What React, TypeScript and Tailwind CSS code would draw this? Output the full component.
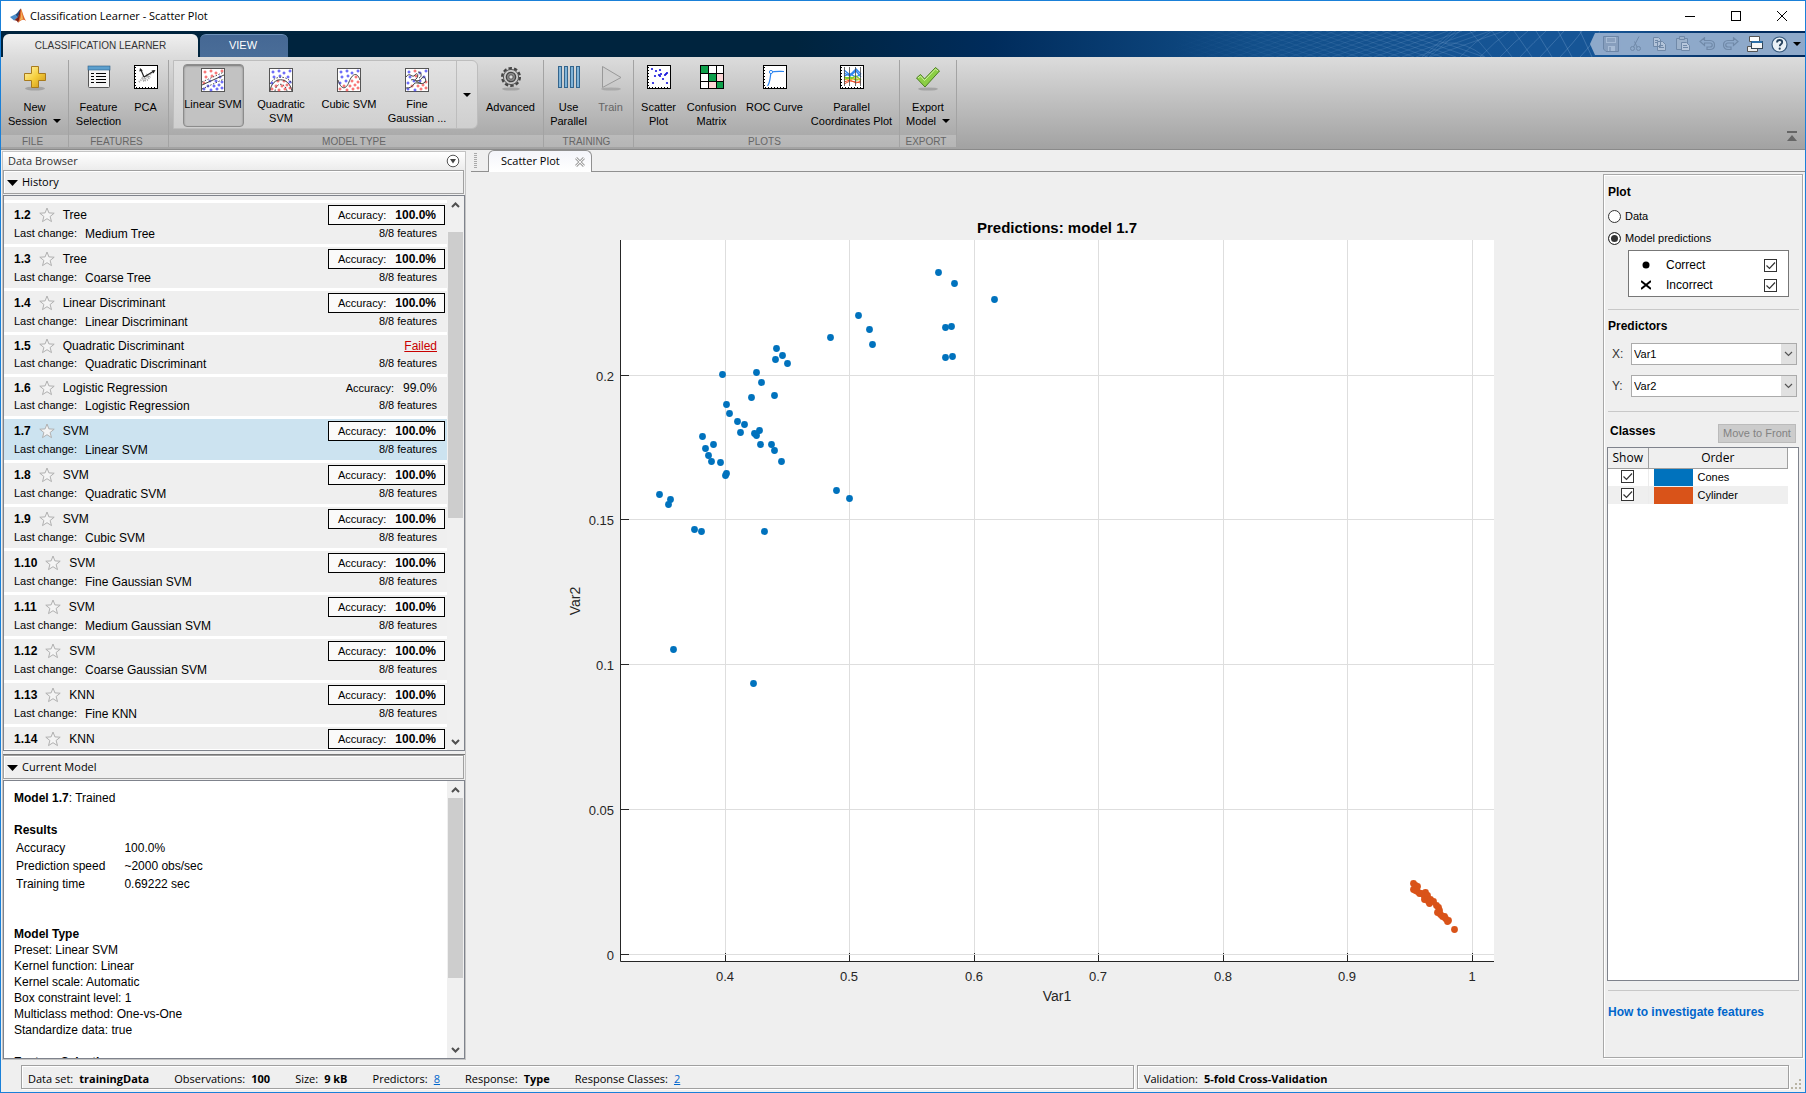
import { useState } from "react";
import type { ReactNode } from "react";
import clsx from "clsx";

const segoe = "font-['Open_Sans','Noto_Sans',sans-serif]";

type Model = { id: string; type: string; change?: string; result?: "best" | "plain" | "failed" };

const models: Model[] = [
  { id: "1.2", type: "Tree", change: "Medium Tree" },
  { id: "1.3", type: "Tree", change: "Coarse Tree" },
  { id: "1.4", type: "Linear Discriminant", change: "Linear Discriminant" },
  { id: "1.5", type: "Quadratic Discriminant", change: "Quadratic Discriminant", result: "failed" },
  { id: "1.6", type: "Logistic Regression", change: "Logistic Regression", result: "plain" },
  { id: "1.7", type: "SVM", change: "Linear SVM" },
  { id: "1.8", type: "SVM", change: "Quadratic SVM" },
  { id: "1.9", type: "SVM", change: "Cubic SVM" },
  { id: "1.10", type: "SVM", change: "Fine Gaussian SVM" },
  { id: "1.11", type: "SVM", change: "Medium Gaussian SVM" },
  { id: "1.12", type: "SVM", change: "Coarse Gaussian SVM" },
  { id: "1.13", type: "KNN", change: "Fine KNN" },
  { id: "1.14", type: "KNN" },
];

// positions inside the axes, measured from the top left corner
const cones = [
  [318, 32], [334, 43], [374, 59], [238, 75], [249, 89], [252, 104], [210, 97], [325, 87], [331, 86], [325, 117],
  [332, 116], [156, 108], [162, 115], [155, 119], [167, 123], [102, 134], [136, 132], [141, 142], [154, 155], [131, 157],
  [106, 164], [109, 173], [117, 181], [124, 184], [120, 192], [139, 190], [134, 193], [136, 195], [140, 204], [151, 204],
  [154, 210], [161, 221], [82, 196], [93, 204], [85, 208], [88, 215], [91, 221], [100, 222], [106, 233], [105, 235],
  [39, 254], [50, 259], [48, 264], [216, 250], [229, 258], [74, 289], [81, 291], [144, 291], [53, 409], [133, 443],
];

const cylinders = [
  [793, 643], [795, 645], [797, 646], [793, 649], [795, 650], [797, 651], [799, 653], [801, 653], [805, 652], [804, 656],
  [807, 655], [804, 659], [807, 659], [808, 661], [809, 663], [810, 659], [813, 661], [816, 665], [818, 667], [819, 670],
  [817, 672], [820, 674], [822, 676], [824, 676], [825, 678], [828, 680], [827, 681], [834, 689],
];

const xTicks = [
  [105, "0.4"], [229, "0.5"], [354, "0.6"], [478, "0.7"], [603, "0.8"], [727, "0.9"], [852, "1"],
] as const;

const yTicks = [
  [135, "0.2"], [279, "0.15"], [424, "0.1"], [569, "0.05"], [714, "0"],
] as const;

/* ---------- icons ---------- */

function Logo() {
  return (
    <svg width="18" height="18" viewBox="0 0 18 18">
      <path d="M1 10 L6 7.5 L9 10.5 L5 13.5 Z" fill="#4a8cc9" />
      <path d="M6 7.5 C8.5 7 9.5 3 12 1.5 L9 10.5 Z" fill="#1f4f86" />
      <path d="M5 13.5 L9 10 C10 6 10.5 3 12 1.5 L11.5 12 L9 15.5 C8 14 6.5 13 5 13.5 Z" fill="#7c1f16" />
      <path d="M12 1.5 C13.5 5 15 11 17 14 C14.5 12 12.5 12.5 9 16 C11 11 11 5 12 1.5 Z" fill="#e0672a" />
      <path d="M12 1.5 C12.6 5 12.5 9 10.5 14 C11.8 12.8 13 12.5 14 12.5 C13.5 9 12.8 4 12 1.5 Z" fill="#f3b65a" />
    </svg>
  );
}

function PlusIcon() {
  return (
    <svg width="24" height="26" viewBox="0 0 24 26">
      <defs>
        <linearGradient id="gold" x1="0" y1="0" x2="1" y2="1">
          <stop offset="0" stopColor="#fff6b8" />
          <stop offset=".5" stopColor="#f6cf3d" />
          <stop offset="1" stopColor="#c98f12" />
        </linearGradient>
      </defs>
      <ellipse cx="12" cy="23.5" rx="10" ry="2" fill="#000" opacity=".18" />
      <path d="M8.5 1.5h7v7h7v7h-7v7h-7v-7h-7v-7h7z" fill="url(#gold)" stroke="#a87a1c" />
    </svg>
  );
}

function FeatureIcon() {
  return (
    <svg width="24" height="24" viewBox="0 0 24 24">
      <rect x="1.5" y="1.5" width="21" height="21" rx="1" fill="#f4f4f4" stroke="#555" />
      <rect x="1" y="1" width="22" height="4" fill="#5c9fcd" stroke="#2c5f86" strokeWidth=".6" />
      <path d="M4 8.500h3M4 11.500h3M4 14.500h3M4 17.500h3" stroke="#000" />
      <path d="M9 8.500h10M9 11.500h10M9 14.500h10M9 17.500h10" stroke="#000" />
    </svg>
  );
}

function PlotFrame({ children }: { children: ReactNode }) {
  return (
    <svg width="24" height="24" viewBox="0 0 24 24">
      <rect x=".5" y=".5" width="23" height="23" fill="#fff" stroke="#000" />
      <path d="M1.500 2V22" stroke="#000" strokeDasharray="1 2" />
      <path d="M2 22.500H22" stroke="#000" strokeDasharray="1 2" />
      {children}
    </svg>
  );
}

function PcaIcon() {
  return (
    <PlotFrame>
      <path d="M5 17l3-3 2 1 3-4 2 1 3-5M8 12l3 2 2-4 3 3M9 16l4-1 3-3" stroke="#aaa" strokeWidth="2" strokeDasharray="1 1" fill="none" />
      <path d="M10 12L20 6M10 12L7 5" stroke="#222" strokeWidth="1.200" />
      <path d="M21.500 5l-4 .6 2 3zM6 3l-.6 3.500 3.400-1z" fill="#222" />
    </PlotFrame>
  );
}

const dotSpots = [
  [4, 4], [10, 3], [15, 5], [21, 3], [5, 9], [11, 8], [19, 9], [3, 15], [9, 13], [15, 13], [21, 14],
  [7, 18], [13, 18], [18, 17], [3, 21], [10, 22], [16, 21], [21, 20],
];

function SvmIcon({ isBlue, lines, dashes }: { isBlue: (x: number, y: number) => boolean; lines: string; dashes?: string }) {
  return (
    <svg width="24" height="24" viewBox="0 0 24 24">
      <rect x=".5" y=".5" width="23" height="23" fill="#fff" stroke="#555" />
      {dotSpots.map(([x, y]) => (
        <circle key={`${x}-${y}`} cx={x} cy={y} r="1" fill="#fff" stroke={isBlue(x, y) ? "#3030f4" : "#f43c3c"} strokeWidth=".9" />
      ))}
      <path d={lines} fill="none" stroke="#444" />
      {dashes && <path d={dashes} fill="none" stroke="#222" strokeWidth=".8" strokeDasharray="1.500 1.500" />}
    </svg>
  );
}

function GearIcon() {
  return (
    <svg width="24" height="26" viewBox="0 0 24 26">
      <ellipse cx="12" cy="24" rx="9" ry="1.600" fill="#000" opacity=".18" />
      <circle cx="12" cy="12" r="8.800" fill="none" stroke="#444" strokeWidth="2.400" strokeDasharray="3.400 2.130" />
      <circle cx="12" cy="12" r="7.600" fill="#c9c9c9" stroke="#555" />
      <circle cx="12" cy="12" r="4.600" fill="#8d8d8d" stroke="#444" strokeWidth="1.400" />
      <circle cx="12" cy="12" r="2.200" fill="#ddd" stroke="#555" />
    </svg>
  );
}

function ParallelIcon() {
  return (
    <svg width="24" height="24" viewBox="0 0 24 24">
      {[1.5, 7.5, 13.5, 19.5].map((x) => (
        <rect key={x} x={x} y="1.500" width="3" height="21" fill="#7fb3d8" stroke="#34658c" />
      ))}
    </svg>
  );
}

function TrainIcon() {
  return (
    <svg width="24" height="26" viewBox="0 0 24 26">
      <ellipse cx="12" cy="24" rx="10" ry="1.600" fill="#000" opacity=".15" />
      <path d="M3.500 1.500L22 12.500 3.500 22.500z" fill="#cfcfcf" stroke="#999" />
    </svg>
  );
}

function ScatterIcon() {
  return (
    <PlotFrame>
      {[[5, 4], [9, 6], [13, 5], [8, 11], [13, 11], [14, 9], [19, 9], [20, 8], [12, 10], [16, 14], [6, 18], [20, 18], [18, 10]].map(([x, y], i) => (
        <circle key={i} cx={x} cy={y} r="1.100" fill="#1414dc" />
      ))}
    </PlotFrame>
  );
}

function ConfusionIcon() {
  const cells = ["#0ea04b", "#fff", "#fff", "#fff", "#0ea04b", "#fcd6d6", "#fff", "#fcd6d6", "#0ea04b"];
  return (
    <svg width="24" height="24" viewBox="0 0 24 24">
      <rect width="24" height="24" />
      {cells.map((fill, i) => (
        <rect key={i} x={(i % 3) * 8 + 1} y={Math.floor(i / 3) * 8 + 1} width={i % 3 === 2 ? 6 : 7} height={i > 5 ? 6 : 7} fill={fill} />
      ))}
    </svg>
  );
}

function RocIcon() {
  return (
    <PlotFrame>
      <path d="M4.500 21C7.500 17 7 12 8 7.500c3-1.500 8-1 13-1" fill="none" stroke="#2f86f0" strokeWidth="1.200" />
      <circle cx="8" cy="7" r="1.600" fill="#fff" stroke="#2f86f0" />
    </PlotFrame>
  );
}

function CoordsIcon() {
  return (
    <PlotFrame>
      <path d="M4 5l6 5 6-6 5 5M4 8l6 3 6-5 5 6M4 11l6-2 6 3 5-3" fill="none" stroke="#2f86f0" strokeWidth="1.300" />
      <path d="M4 12l6 2 6-3 5 4M4 15l6-3 6 3 5-1" fill="none" stroke="#7fd02a" strokeWidth="1.400" />
      <path d="M4 14l6 1 6-2 5 3" fill="none" stroke="#f5b82e" />
      <path d="M4 17l6-2 6 3 5-2M4 19l6-3 6 1 5 1" fill="none" stroke="#f0502a" />
      <path d="M4.500 2v19M9.500 2v19M15.500 2v19M20.500 2v19" stroke="#444" strokeWidth=".8" />
    </PlotFrame>
  );
}

function ExportIcon() {
  return (
    <svg width="26" height="26" viewBox="0 0 26 26">
      <ellipse cx="13" cy="24" rx="10" ry="1.600" fill="#000" opacity=".18" />
      <path d="M1.500 13l4-3.500 4 4.500L20.500 2.500l4 3.500L10 22z" fill="#8ccf45" stroke="#4b7f1f" />
      <path d="M3 13l2.500-2 4 4.500L20.500 4l2.500 2" fill="none" stroke="#d3f0a5" />
    </svg>
  );
}

function Star() {
  return (
    <svg width="16" height="16" viewBox="0 0 16 16" className="shrink-0">
      <path d="M8 1l1.900 4.900 5.300.3-4.100 3.300 1.400 5.100L8 11.700l-4.500 2.900 1.400-5.100L.8 6.200l5.300-.3z" fill="#f4f4f4" stroke="#b0b0b0" />
    </svg>
  );
}

function Caret() {
  return (
    <svg width="8" height="4" viewBox="0 0 8 4">
      <path d="M0 0h8L4 4z" fill="#000" />
    </svg>
  );
}

/* ---------- small controls ---------- */

function Check({ label }: { label: string }) {
  return (
    <span className="relative inline-flex size-[13px]">
      <input type="checkbox" defaultChecked aria-label={label} className="peer size-[13px] appearance-none border border-[#333] bg-white" />
      <svg width="13" height="13" viewBox="0 0 13 13" className="pointer-events-none absolute inset-0 hidden peer-checked:block">
        <path d="M2.500 6.500l3 3 5.500-6" fill="none" stroke="#333" strokeWidth="1.200" />
      </svg>
    </span>
  );
}

function ScrollBar({ children }: { children: ReactNode }) {
  return (
    <div className="flex w-[17px] shrink-0 flex-col bg-[#f0f0f0] px-px">
      <button type="button" aria-label="Scroll up" className="flex h-[17px] items-center justify-center">
        <svg width="9" height="6" viewBox="0 0 9 6"><path d="M1 5l3.500-3.500L8 5" fill="none" stroke="#505050" strokeWidth="2" /></svg>
      </button>
      <div className="flex flex-1 flex-col">{children}</div>
      <button type="button" aria-label="Scroll down" className="flex h-[17px] items-center justify-center">
        <svg width="9" height="6" viewBox="0 0 9 6"><path d="M1 1l3.500 3.500L8 1" fill="none" stroke="#505050" strokeWidth="2" /></svg>
      </button>
    </div>
  );
}

function Tool({ icon, lines, width, menu, disabled }: { icon: ReactNode; lines: string[]; width: string; menu?: boolean; disabled?: boolean }) {
  return (
    <button type="button" disabled={disabled} className={clsx("flex shrink-0 flex-col items-center pt-2 text-[11px] leading-[14px]", width, disabled ? "text-[#666]" : "text-black")}>
      <span className="flex h-6 items-start justify-center">{icon}</span>
      <span className="mt-[11px] flex flex-col items-center whitespace-nowrap">
        {lines.map((line, i) => (
          <span key={line} className="flex items-center gap-1.5">
            {line}
            {menu && i === lines.length - 1 && <Caret />}
          </span>
        ))}
      </span>
    </button>
  );
}

function GalleryItem({ icon, lines, active, onClick }: { icon: ReactNode; lines: string[]; active: boolean; onClick: () => void }) {
  return (
    <div className="flex w-[68px] shrink-0 justify-center pt-[3px] pb-px">
      <button
        type="button"
        onClick={onClick}
        className={clsx(
          "flex w-[61px] flex-col items-center rounded border pt-[3px] text-[11px] leading-[14px] whitespace-nowrap",
          active ? "border-[#8c8c8c] bg-[#c2c2c2] shadow-[inset_0_1px_2px_#777]" : "border-transparent"
        )}
      >
        {icon}
        <span className="mt-[5px] flex flex-col items-center">
          {lines.map((line) => <span key={line}>{line}</span>)}
        </span>
      </button>
    </div>
  );
}

function Section({ title, children, className }: { title: string; children: ReactNode; className?: string }) {
  return (
    <section className={clsx("mt-[3px] mb-[2px] flex shrink-0 flex-col border-r border-[#a3a3a3]", className)}>
      <div className="-mt-[3px] flex flex-1 justify-center">{children}</div>
      <h2 className="h-3 bg-white/20 pr-1 text-center text-[10px] leading-[13px] text-[#666]">{title}</h2>
    </section>
  );
}

/* ---------- window parts ---------- */

function TitleBar() {
  return (
    <header className={clsx("flex h-[30px] shrink-0 items-center bg-white pl-2 text-[11px]", segoe)}>
      <Logo />
      <h1 className="ml-[3px] flex-1">Classification Learner - Scatter Plot</h1>
      <button type="button" aria-label="Minimize" className="flex h-full w-[46px] items-center justify-center">
        <svg width="10" height="10" viewBox="0 0 10 10"><path d="M0 5.500h10" stroke="#000" /></svg>
      </button>
      <button type="button" aria-label="Maximize" className="flex h-full w-[46px] items-center justify-center">
        <svg width="10" height="10" viewBox="0 0 10 10"><rect x=".5" y=".5" width="9" height="9" fill="none" stroke="#000" /></svg>
      </button>
      <button type="button" aria-label="Close" className="flex h-full w-[46px] items-center justify-center">
        <svg width="10" height="10" viewBox="0 0 10 10"><path d="M0 0l10 10M10 0L0 10" stroke="#000" /></svg>
      </button>
    </header>
  );
}

function MeshPattern() {
  const steps = Array.from({ length: 21 }, (_, i) => i);
  return (
    <svg width="430" height="26" viewBox="0 0 430 26" className="absolute inset-y-0 right-[205px]">
      <defs>
        <linearGradient id="meshFade" x1="0" x2="430" y1="0" y2="0" gradientUnits="userSpaceOnUse">
          <stop offset="0" stopColor="#8fb4dc" stopOpacity="0" />
          <stop offset="1" stopColor="#8fb4dc" stopOpacity=".45" />
        </linearGradient>
      </defs>
      <g fill="none" stroke="url(#meshFade)" strokeWidth=".7">
        {steps.map((i) => <path key={`a${i}`} d={`M${i * 14 - 20} 26L${i * 14 + 54} 0`} />)}
        {steps.map((i) => <path key={`b${i}`} d={`M${i * 14 - 40} 0L${i * 14 + 34} 26`} />)}
        {[0, 1, 2, 3, 4, 5, 6].map((i) => <path key={`c${i}`} d={`M${290 + i * 20} 26Q${305 + i * 20} 10 ${322 + i * 18} 0M${300 + i * 22} 0L${322 + i * 20} 26`} />)}
        <path d="M252 26L282 0M255 26L286 0M259 26L290 0M275 12q20-2 40 14" />
      </g>
    </svg>
  );
}

function QuickAccess() {
  return (
    <div className="absolute inset-y-[2px] right-0 flex items-center bg-[#8ea9ca] pr-[2px] pl-[9px] [clip-path:polygon(0_50%,5px_0,100%_0,100%_100%,5px_100%)]">
      <button type="button" aria-label="Save" disabled className="flex w-6 justify-center">
        <svg width="16" height="16" viewBox="0 0 16 16" opacity=".6"><path d="M.5.5h15v15H3L.5 13z" fill="#8298b5" stroke="#56708f" /><path d="M3 1h10v6H3zM5 10h7v5H5z" fill="#b8c8dc" /><path d="M4 3h8M4 5h8M7 11v4" stroke="#56708f" /></svg>
      </button>
      <button type="button" aria-label="Cut" disabled className="flex w-6 justify-center">
        <svg width="16" height="16" viewBox="0 0 16 16" fill="none" stroke="#7089a8"><path d="M12 .5L6.500 11M7.500 5.500L10 11" /><circle cx="5.500" cy="12.500" r="2" /><circle cx="11.500" cy="12.500" r="2" /></svg>
      </button>
      <button type="button" aria-label="Copy" disabled className="flex w-6 justify-center">
        <svg width="16" height="16" viewBox="0 0 16 16" fill="#b2c3d9" stroke="#7089a8"><path d="M2.500 1.500h5l2 2v7h-7zM6.500 5.500h5l3 3v6h-8z" /><path d="M4 4.500h3M4 6.500h2M8 9.500h4M8 11.500h5" /></svg>
      </button>
      <button type="button" aria-label="Paste" disabled className="flex w-6 justify-center">
        <svg width="16" height="16" viewBox="0 0 16 16" fill="#9db2cb" stroke="#7089a8"><path d="M1.500 2.500h11v11h-11z" /><path d="M4.500.5h5v3h-5z" /><path d="M6.500 6.500h5l3 3v5h-8z" fill="#b7c7dc" /><path d="M8 9.500h4M8 11.500h5" /></svg>
      </button>
      <button type="button" aria-label="Undo" disabled className="flex w-6 justify-center">
        <svg width="16" height="14" viewBox="0 0 16 14" fill="none" stroke="#7089a8" strokeWidth="1.200"><path d="M5.500.8L1 4.500l4.500 4V6H11c3 0 3 4 0 4H8v2.500h3c6 0 6-9 0-9H5.500z" /></svg>
      </button>
      <button type="button" aria-label="Redo" disabled className="flex w-6 justify-center">
        <svg width="16" height="14" viewBox="0 0 16 14" fill="none" stroke="#7089a8" strokeWidth="1.200"><path d="M10.500.8L15 4.500l-4.500 4V6H5c-3 0-3 4 0 4h3v2.500H5c-6 0-6-9 0-9h5.500z" /></svg>
      </button>
      <button type="button" aria-label="Switch windows" className="flex w-6 justify-center">
        <svg width="16" height="17" viewBox="0 0 16 17"><path d="M2.500.5h10v5h-10z" fill="#fff" stroke="#555" /><path d="M.5 10.500h10v5H.5z" fill="#eee" stroke="#555" /><rect x="4.500" y="5.500" width="11" height="7" fill="#f6f6f6" stroke="#345" /><path d="M4.500 6h11" stroke="#2d6fa8" strokeWidth="2" /></svg>
      </button>
      <button type="button" aria-label="Help" className="flex w-6 justify-center">
        <svg width="17" height="17" viewBox="0 0 17 17"><circle cx="8.500" cy="8.500" r="7.500" fill="#e9f0f6" stroke="#37597c" strokeWidth="1.200" /><path d="M6 6.500c0-3.400 5.200-3.200 5.200-.2 0 2-2.500 2-2.500 4" fill="none" stroke="#26425e" strokeWidth="1.800" /><circle cx="8.700" cy="12.700" r="1.100" fill="#26425e" /></svg>
      </button>
      <button type="button" aria-label="More" className="flex w-3 justify-center"><Caret /></button>
    </div>
  );
}

function TabBar() {
  return (
    <nav className="relative flex h-[26px] shrink-0 items-end gap-[2px] bg-[linear-gradient(to_right,#00243e_0%,#00243e_44%,#002c5c_55%,#124f8a_70%,#165596_85%,#165596_89%,#00295c_97%)] pl-[2px]">
      <button type="button" className="h-[23px] w-[195px] rounded-t-md bg-gradient-to-b from-[#f0f0f0] to-[#dcdcdc] pb-px text-[10px] text-[#333]">CLASSIFICATION LEARNER</button>
      <button type="button" className="h-[23px] w-[88px] rounded-t-md border-t border-[#6f93ba] bg-gradient-to-b from-[#456894] to-[#4a6d98] pr-[2px] pb-[2px] text-[11px] text-white">VIEW</button>
      <MeshPattern />
      <QuickAccess />
    </nav>
  );
}

const svmKinds = [
  { lines: ["Linear SVM"], icon: <SvmIcon isBlue={(x, y) => y > 17 - x / 2} lines="M1 17L23 7" dashes="M1 14L23 4M1 21L23 11" /> },
  { lines: ["Quadratic", "SVM"], icon: <SvmIcon isBlue={(x, y) => (x - 12) ** 2 + (y - 22) ** 2 > 110} lines="M1 23C3 8 20 8 23 23" dashes="M1 16C5 7 19 7 23 16M6 23c1-9 10-9 12 0" /> },
  { lines: ["Cubic SVM"], icon: <SvmIcon isBlue={(x, y) => (x < 12 ? y < 18 : y < 7)} lines="M1 12C4 22 9 22 12 14S20 3 23 12" /> },
  { lines: ["Fine", "Gaussian ..."], icon: <SvmIcon isBlue={(x, y) => (x * 3 + y) % 2 === 0} lines="M1 9c4-6 6 2 9-2s4 2 1 4 4 3 6-1 6 3 2 5-8-2-10 1-4 4-8 4M6 12c3-2 6 3 10 3M13 4c4 0 4 5 1 6" /> },
];

function Ribbon() {
  const [kind, setKind] = useState(0);
  return (
    <div className="flex h-[93px] shrink-0 border-b border-[#8a8a8a] bg-gradient-to-b from-[#dcdcdc] to-[#a2a2a2]">
      <Section title="FILE" className="w-[68px]">
        <Tool icon={<PlusIcon />} lines={["New", "Session"]} width="w-[66px]" menu />
      </Section>
      <Section title="FEATURES" className="w-[100px]">
        <Tool icon={<FeatureIcon />} lines={["Feature", "Selection"]} width="w-[54px]" />
        <Tool icon={<PcaIcon />} lines={["PCA"]} width="w-[40px]" />
      </Section>
      <Section title="MODEL TYPE" className="w-[375px]">
        <div className="mt-[3px] mb-[6px] ml-1 flex w-[305px] rounded-r-md border border-[#bdbdbd] bg-gradient-to-b from-[#e2e2e2] to-[#cfcfcf]">
          <div className="flex flex-1 pl-[5px]">
            {svmKinds.map((item, i) => (
              <GalleryItem key={i} icon={item.icon} lines={item.lines} active={kind === i} onClick={() => setKind(i)} />
            ))}
          </div>
          <button type="button" aria-label="More models" className="flex w-[21px] items-center justify-center border-l border-[#bdbdbd]"><Caret /></button>
        </div>
        <Tool icon={<GearIcon />} lines={["Advanced"]} width="w-[65px]" />
      </Section>
      <Section title="TRAINING" className="w-[90px]">
        <Tool icon={<ParallelIcon />} lines={["Use", "Parallel"]} width="w-[44px]" />
        <Tool icon={<TrainIcon />} lines={["Train"]} width="w-[40px]" disabled />
      </Section>
      <Section title="PLOTS" className="w-[266px]">
        <Tool icon={<ScatterIcon />} lines={["Scatter", "Plot"]} width="w-[44px]" />
        <Tool icon={<ConfusionIcon />} lines={["Confusion", "Matrix"]} width="w-[62px]" />
        <Tool icon={<RocIcon />} lines={["ROC Curve"]} width="w-[64px]" />
        <Tool icon={<CoordsIcon />} lines={["Parallel", "Coordinates Plot"]} width="w-[90px]" />
      </Section>
      <Section title="EXPORT" className="w-[57px]">
        <Tool icon={<ExportIcon />} lines={["Export", "Model"]} width="w-[54px]" menu />
      </Section>
      <button type="button" aria-label="Collapse toolstrip" className="mr-2 mb-2 ml-auto self-end">
        <svg width="10" height="10" viewBox="0 0 10 10"><path d="M0 0h10v2H0zM5 4l5 6H0z" fill="#666" /></svg>
      </button>
    </div>
  );
}

function PanelHeader({ title }: { title: string }) {
  return (
    <button type="button" className={clsx("mr-px flex h-6 shrink-0 items-center gap-1 border border-[#a0a0a0] pt-px pl-[3px] text-left text-[11px] shadow-[inset_1px_1px_0_#fff]", segoe)}>
      <svg width="11" height="6" viewBox="0 0 11 6"><path d="M0 0h11L5.500 6z" fill="#000" /></svg>
      {title}
    </button>
  );
}

function ModelRow({ model, selected, onSelect }: { model: Model; selected: boolean; onSelect: () => void }) {
  const { result = "best" } = model;
  return (
    <li onClick={onSelect} className={clsx("shrink-0 pt-[2px] pr-[2px] pl-[10px]", selected ? "bg-[#cce3f0]" : "bg-[#efefef]")}>
      <div className={clsx("flex items-center gap-2", result === "best" ? "h-5" : "h-[18px]")}>
        <b>{model.id}</b>
        <Star />
        <span className="flex-1">{model.type}</span>
        {result === "best" && (
          <span className="flex h-5 items-center gap-[9px] border border-black bg-[#fafafa] pr-2 pl-[9px]">
            <span className="text-[11px]">Accuracy:</span>
            <b>100.0%</b>
          </span>
        )}
        {result === "plain" && (
          <span className="flex items-center gap-[9px] pr-2">
            <span className="text-[11px]">Accuracy:</span>
            99.0%
          </span>
        )}
        {result === "failed" && <a href="#failed" className="pr-2 text-[#c80000] underline">Failed</a>}
      </div>
      {model.change && (
        <div className="mb-[2px] flex h-[17px] items-center gap-2 pr-2">
          <span className="text-[11px]">Last change:</span>
          <span className="flex-1">{model.change}</span>
          <span className="text-[11px]">8/8 features</span>
        </div>
      )}
    </li>
  );
}

function DataBrowser() {
  const [selected, setSelected] = useState("1.7");
  return (
    <aside className="mt-px ml-px flex w-[464px] shrink-0 flex-col border border-[#c4c4c4] text-[12px]">
      <div className={clsx("flex h-[18px] shrink-0 items-center justify-between bg-gradient-to-b from-white to-[#ececec] pr-[5px] pl-[5px] text-[11px] text-[#333]", segoe)}>
        Data Browser
        <button type="button" aria-label="Panel actions">
          <svg width="14" height="14" viewBox="0 0 14 14"><circle cx="7" cy="7" r="5.800" fill="#fff" stroke="#555" /><path d="M4 5h6L7 9.500z" fill="#444" /></svg>
        </button>
      </div>
      <PanelHeader title="History" />
      <div className="mt-px flex min-h-0 flex-[2] border border-[#7f838c] bg-white">
        <ul className="flex flex-1 flex-col gap-[3px] overflow-hidden">
          <li className="h-1 shrink-0 bg-[#efefef]" />
          {models.map((m) => (
            <ModelRow key={m.id} model={m} selected={m.id === selected} onSelect={() => setSelected(m.id)} />
          ))}
        </ul>
        <ScrollBar>
          <div className="grow-[19]" />
          <div className="grow-[287] bg-[#cdcdcd]" />
          <div className="grow-[215]" />
        </ScrollBar>
      </div>
      <div className="mt-[3px] h-px shrink-0 bg-[#777]" />
      <PanelHeader title="Current Model" />
      <div className="mt-px flex min-h-0 flex-1 border border-[#7f838c] bg-white">
        <div className="flex-1 overflow-hidden pt-[9px] pl-[10px] leading-4">
          <p><b>Model 1.7</b>: Trained</p>
          <h3 className="mt-4 font-bold">Results</h3>
          <table className="mt-px leading-[18px]">
            <tbody>
              <tr><td className="pr-[19px] pl-[2px]">Accuracy</td><td>100.0%</td></tr>
              <tr><td className="pr-[19px] pl-[2px]">Prediction speed</td><td>~2000 obs/sec</td></tr>
              <tr><td className="pr-[19px] pl-[2px]">Training time</td><td>0.69222 sec</td></tr>
            </tbody>
          </table>
          <h3 className="mt-[33px] font-bold">Model Type</h3>
          <p>Preset: Linear SVM</p>
          <p>Kernel function: Linear</p>
          <p>Kernel scale: Automatic</p>
          <p>Box constraint level: 1</p>
          <p>Multiclass method: One-vs-One</p>
          <p>Standardize data: true</p>
          <h3 className="mt-4 font-bold">Feature Selection</h3>
        </div>
        <ScrollBar>
          <div className="grow-[180] bg-[#cdcdcd]" />
          <div className="grow-[63]" />
        </ScrollBar>
      </div>
    </aside>
  );
}

function Figure() {
  return (
    <svg viewBox="0 0 1137 888" className="h-full min-h-0 w-full min-w-0 flex-1 font-['Liberation_Sans',sans-serif]">
      <g transform="translate(154 68)">
        <rect width="874" height="721" fill="#fff" />
        <text x="437" y="-7" textAnchor="middle" fontSize="15" fontWeight="700">Predictions: model 1.7</text>
        {xTicks.map(([x, label]) => (
          <g key={label}>
            <path d={`M${x + 0.5} 0v721`} stroke="#dedede" />
            <path d={`M${x + 0.5} 721v-8`} stroke="#262626" />
            <text x={x} y="741" textAnchor="middle" fontSize="13" fill="#262626">{label}</text>
          </g>
        ))}
        {yTicks.map(([y, label]) => (
          <g key={label}>
            <path d={`M0 ${y + 0.5}h874`} stroke="#dedede" />
            <path d={`M0 ${y + 0.5}h9`} stroke="#262626" />
            <text x="-6" y={y + 6} textAnchor="end" fontSize="13" fill="#262626">{label}</text>
          </g>
        ))}
        <path d="M.5 0V721.500H874" fill="none" stroke="#262626" />
        <text x="437" y="761" textAnchor="middle" fontSize="14" fill="#262626">Var1</text>
        <text x="-40" y="361" textAnchor="middle" fontSize="14" fill="#262626" transform="rotate(-90 -40 361)">Var2</text>
        {cones.map(([x, y], i) => <circle key={i} cx={x + 0.5} cy={y + 0.5} r="3.400" fill="#0072bd" />)}
        {cylinders.map(([x, y], i) => <circle key={i} cx={x + 0.5} cy={y + 0.5} r="3.400" fill="#d95319" />)}
      </g>
    </svg>
  );
}

function AxisSelect({ id, label, value }: { id: string; label: string; value: string }) {
  return (
    <div className="flex items-center pr-[2px] pl-1 text-[11px]">
      <label htmlFor={id} className="w-[19px] text-[12px] text-[#333]">{label}</label>
      <div className="relative flex-1">
        <select id={id} defaultValue={value} className="block h-[22px] w-full appearance-none border border-[#ababab] bg-white pl-[2px]">
          <option>Var1</option>
          <option>Var2</option>
        </select>
        <span className="pointer-events-none absolute inset-y-px right-px flex w-[15px] items-center justify-center bg-[#e1e1e1]">
          <svg width="9" height="6" viewBox="0 0 9 6"><path d="M1 1l3.500 3.500L8 1" fill="none" stroke="#555" strokeWidth="1.200" /></svg>
        </span>
      </div>
    </div>
  );
}

function PlotOptions() {
  const radio = "mr-1 size-[13px] appearance-none rounded-full border border-[#333] bg-white checked:bg-[#333] checked:shadow-[inset_0_0_0_2px_#fff]";
  return (
    <aside className="mt-[2px] mr-[2px] mb-[2px] flex w-[200px] shrink-0 flex-col border border-[#a8a8a8] pr-[3px] pl-1 text-[11px] shadow-[inset_1px_1px_0_#fff,1px_1px_0_#fff]">
      <h2 className="mt-[9px] text-[12px] leading-4 font-bold">Plot</h2>
      <label className="mt-2 flex h-4 items-center"><input type="radio" name="source" className={radio} />Data</label>
      <label className="mt-[6px] flex h-4 items-center"><input type="radio" name="source" defaultChecked className={radio} />Model predictions</label>
      <div className="mt-1 mr-[10px] ml-5 flex flex-col border border-[#777] bg-white pt-1 pr-[11px] pb-px pl-3 text-[12px] leading-5">
        <div className="flex items-center">
          <svg width="10" height="10" viewBox="0 0 10 10"><circle cx="5" cy="5" r="3.500" /></svg>
          <span className="ml-[15px] flex-1">Correct</span>
          <Check label="Correct" />
        </div>
        <div className="flex items-center">
          <svg width="10" height="10" viewBox="0 0 10 10"><path d="M0 1l10 8M10 1L0 9" stroke="#000" strokeWidth="2" /></svg>
          <span className="ml-[15px] flex-1">Incorrect</span>
          <Check label="Incorrect" />
        </div>
      </div>
      <hr className="mt-3 border-[#c8c8c8]" />
      <h2 className="mt-2 mb-[9px] text-[12px] leading-4 font-bold">Predictors</h2>
      <AxisSelect id="x-axis" label="X:" value="Var1" />
      <div className="h-[10px]" />
      <AxisSelect id="y-axis" label="Y:" value="Var2" />
      <hr className="mt-[14px] border-[#c8c8c8]" />
      <div className="mt-3 mb-1 flex items-start justify-between pr-[3px] pl-[2px]">
        <h2 className="text-[12px] leading-[14px] font-bold">Classes</h2>
        <button type="button" disabled className="h-[19px] w-[78px] border border-[#bbb] bg-[#cccccc] text-[#838383]">Move to Front</button>
      </div>
      <div className="-ml-px flex-1 border border-[#7f838c] bg-white pr-[10px]">
        <table className="w-full border-collapse">
          <thead>
            <tr className={clsx("h-[20px] bg-[#efefef] text-[12px] leading-4", segoe)}>
              <th className="w-10 border-r border-b border-[#a0a0a0] font-normal">Show</th>
              <th className="border-r border-b border-[#a0a0a0] font-normal">Order</th>
            </tr>
          </thead>
          <tbody>
            {[["Cones", "bg-[#0072bd]", "bg-white"], ["Cylinder", "bg-[#d95319]", "bg-[#efefef]"]].map(([name, color, row]) => (
              <tr key={name} className={clsx("h-[18px]", row)}>
                <td className="border-r border-[#ececec] text-center leading-none"><Check label={name} /></td>
                <td>
                  <div className="flex items-center gap-[5px] pl-[5px]">
                    <span className={clsx("h-[17px] w-[39px]", color)} />
                    {name}
                  </div>
                </td>
              </tr>
            ))}
          </tbody>
        </table>
      </div>
      <hr className="mt-[9px] border-[#c8c8c8]" />
      <a href="#features" className="mt-[13px] mb-[37px] text-[12px] leading-4 font-bold text-[#0066cc]">How to investigate features</a>
    </aside>
  );
}

function StatusItem({ label, children }: { label: string; children: ReactNode }) {
  return (
    <span className="flex gap-1.5 whitespace-nowrap">
      <span>{label}</span>
      {children}
    </span>
  );
}

function StatusBar() {
  const cell = "flex basis-0 items-center border border-[#a0a0a0] pt-[3px] pl-1.5 leading-4 shadow-[inset_1px_1px_0_#fff,1px_1px_0_#fff]";
  return (
    <footer className={clsx("relative flex h-8 shrink-0 gap-[3px] pt-[5px] pr-4 pb-[3px] pl-5 text-[11px]", segoe)}>
      <div className={clsx(cell, "grow-[1115] gap-[25px]")}>
        <StatusItem label="Data set:"><b>trainingData</b></StatusItem>
        <StatusItem label="Observations:"><b>100</b></StatusItem>
        <StatusItem label="Size:"><b>9 kB</b></StatusItem>
        <StatusItem label="Predictors:"><a href="#predictors" className="text-[#0066cc] underline">8</a></StatusItem>
        <StatusItem label="Response:"><b>Type</b></StatusItem>
        <StatusItem label="Response Classes:"><a href="#classes" className="text-[#0066cc] underline">2</a></StatusItem>
      </div>
      <div className={clsx(cell, "grow-[650]")}>
        <StatusItem label="Validation:"><b>5-fold Cross-Validation</b></StatusItem>
      </div>
      <svg width="12" height="12" viewBox="0 0 12 12" className="absolute right-0.5 bottom-0.5">
        <path d="M8 1h2v2H8zM8 5h2v2H8zM8 9h2v2H8zM4 5h2v2H4zM4 9h2v2H4zM0 9h2v2H0z" fill="#b8b4a4" />
      </svg>
    </footer>
  );
}

export default function App() {
  return (
    <div className="flex h-screen flex-col overflow-hidden border border-[#1a80d8] bg-[#efefef] font-['Liberation_Sans',sans-serif] text-black">
      <TitleBar />
      <TabBar />
      <Ribbon />
      <main className="flex min-h-0 flex-1">
        <DataBrowser />
        <div className="flex min-w-0 flex-1 flex-col">
          <div className="ml-[5px] flex h-[22px] shrink-0 border-b border-[#909090]">
            <div className="mt-[3px] ml-[3px] h-4 w-[3px] bg-[repeating-linear-gradient(to_bottom,#aaa_0_1px,transparent_1px_2px)]" />
            <div className={clsx("-mb-px ml-[11px] flex w-[104px] items-center rounded-t-md border border-b-0 border-[#909090] bg-gradient-to-b from-[#f4f5fa] to-white pl-3 text-[11px]", segoe)}>
              <span className="flex-1 whitespace-nowrap">Scatter Plot</span>
              <button type="button" aria-label="Close tab" className="mr-1.5">
                <svg width="10" height="10" viewBox="0 0 10 10"><path d="M1 1l8 8M9 1l-8 8" stroke="#a8a8a8" strokeWidth="3" /><path d="M1 1l8 8M9 1l-8 8" stroke="#f4f4f4" strokeWidth="1" /></svg>
              </button>
            </div>
          </div>
          <div className="flex min-h-0 flex-1">
            <Figure />
            <PlotOptions />
          </div>
        </div>
      </main>
      <StatusBar />
    </div>
  );
}
